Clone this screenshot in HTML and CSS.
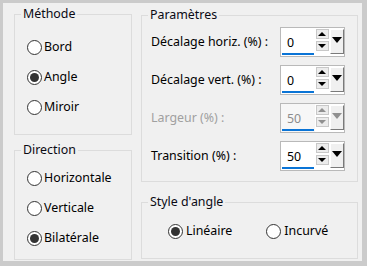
FILE: index.html
```html
<!DOCTYPE html>
<html>
<head>
<meta charset="utf-8">
<link rel="stylesheet" href="styles.css">
</head>
<body>
<div class="panel">
  <div class="col left">
    <fieldset class="group methode">
      <legend>Méthode</legend>
      <div class="inner">
        <div class="radio"><span class="dot"></span>Bord</div>
        <div class="radio"><span class="dot on"></span>Angle</div>
        <div class="radio"><span class="dot"></span>Miroir</div>
      </div>
    </fieldset>
    <fieldset class="group direction">
      <legend>Direction</legend>
      <div class="inner">
        <div class="radio"><span class="dot"></span>Horizontale</div>
        <div class="radio"><span class="dot"></span>Verticale</div>
        <div class="radio"><span class="dot on"></span>Bilatérale</div>
      </div>
    </fieldset>
  </div>
  <div class="col right">
    <fieldset class="group params">
      <legend>Paramètres</legend>
      <div class="inner">
        <div class="row"><span class="lbl">Décalage horiz. (%) :</span>
          <div class="spin"><div class="field"><span>0</span></div><div class="arrows"><span class="up"></span><span class="down"></span></div><div class="drop"></div></div>
        </div>
        <div class="row"><span class="lbl">Décalage vert. (%) :</span>
          <div class="spin"><div class="field"><span>0</span></div><div class="arrows"><span class="up"></span><span class="down"></span></div><div class="drop"></div></div>
        </div>
        <div class="row disabled"><span class="lbl">Largeur (%) :</span>
          <div class="spin"><div class="field"><span>50</span></div><div class="arrows"><span class="up"></span><span class="down"></span></div><div class="drop"></div></div>
        </div>
        <div class="row"><span class="lbl">Transition (%) :</span>
          <div class="spin"><div class="field"><span>50</span></div><div class="arrows"><span class="up"></span><span class="down"></span></div><div class="drop"></div></div>
        </div>
      </div>
    </fieldset>
    <fieldset class="group style">
      <legend>Style d'angle</legend>
      <div class="inner hradios">
        <div class="radio"><span class="dot on"></span>Linéaire</div>
        <div class="radio"><span class="dot"></span>Incurvé</div>
      </div>
    </fieldset>
  </div>
</div>
</body>
</html>
```
FILE: styles.css
```css
html, body {
  margin: 0;
  padding: 0;
  background: #cbcbcb;
  width: 367px;
  height: 266px;
  overflow: hidden;
}
.panel {
  margin: 3px 0 0 3px;
  width: 359px;
  height: 258px;
  background: #f0f0f0;
  box-sizing: border-box;
  padding: 4px 0 0 11px;
  display: flex;
  gap: 9px;
  font-family: "Noto Sans", "Open Sans", sans-serif;
  font-size: 12.4px;
  color: #000;
}
.col {
  display: flex;
  flex-direction: column;
}
.left { width: 118px; gap: 8px; }
.right { width: 217px; gap: 13px; padding-top: 1px; }
.group {
  margin: 0;
  border: 1px solid #dcdcdc;
  padding: 0;
  box-sizing: border-box;
  min-width: 0;
}
.group legend {
  padding: 0 2px;
  margin-left: 6px;
  line-height: 14px;
  height: 14px;
  color: #0a0a14;
}
.methode { height: 128px; }
.methode .inner { padding: 18px 0 0 12px; }
.direction { height: 117px; }
.direction .inner { padding: 13px 0 0 12px; }
.radio {
  display: flex;
  align-items: center;
  height: 16px;
  margin-bottom: 14px;
  line-height: 16px;
}
.dot {
  width: 15px;
  height: 15px;
  border: 1px solid #333;
  border-radius: 50%;
  background: #fff;
  box-sizing: border-box;
  margin-right: 2px;
  position: relative;
  flex: none;
}
.dot.on::after {
  content: "";
  position: absolute;
  left: 2px;
  top: 2px;
  width: 9px;
  height: 9px;
  border-radius: 50%;
  background: #333;
}
.params { height: 174px; }
.params .inner { padding: 5px 12px 0 9px; }
.row {
  display: flex;
  justify-content: space-between;
  align-items: center;
  height: 30px;
  margin-bottom: 8px;
}
.row .lbl { margin-top: -2px; }
.row.disabled .lbl { color: #a0a0a0; }
.spin {
  display: flex;
  width: 65px;
  height: 30px;
  border: 1px solid #b9b9b9;
  box-sizing: border-box;
  background: #fff;
}
.field {
  width: 34px;
  position: relative;
  padding: 6px 0 0 6px;
  box-sizing: border-box;
}
.field::after {
  content: "";
  position: absolute;
  left: 1px;
  right: 1px;
  bottom: 1px;
  height: 2px;
  background: #0a74d6;
}
.disabled .field { background: #f7f7f7; color: #8c8c8c; }
.arrows {
  width: 13px;
  margin: 1px 1px 0 1px;
  display: flex;
  flex-direction: column;
  gap: 2px;
}
.arrows span {
  height: 10px;
  background: #ececec;
  border: 1px solid #c8c8c8;
  box-sizing: border-box;
  position: relative;
}
.arrows span::after {
  content: "";
  position: absolute;
  left: 1px;
  border-left: 4.5px solid transparent;
  border-right: 4.5px solid transparent;
}
.arrows .up::after { top: 2px; border-bottom: 4px solid #000; }
.arrows .down::after { top: 2px; border-top: 4px solid #000; }
.disabled .arrows .up::after { border-bottom-color: #909090; }
.disabled .arrows .down::after { border-top-color: #909090; }
.drop {
  width: 14px;
  height: 25px;
  margin-top: 1px;
  background: #f0f0f0;
  border-top: 1px solid #fff;
  border-left: 1px solid #fff;
  border-right: 1px solid #7a7a7a;
  border-bottom: 1px solid #7a7a7a;
  box-sizing: border-box;
  position: relative;
}
.drop::after {
  content: "";
  position: absolute;
  left: 1px;
  top: 7px;
  border-left: 5px solid transparent;
  border-right: 5px solid transparent;
  border-top: 6px solid #000;
}
.disabled .drop::after { border-top-color: #909090; }
.style { height: 64px; }
.style .inner { padding: 14px 0 0 26px; }
.hradios { display: flex; gap: 34px; }
.hradios .radio { margin: 0; }
.hradios .dot { margin-right: 3px; }
```
